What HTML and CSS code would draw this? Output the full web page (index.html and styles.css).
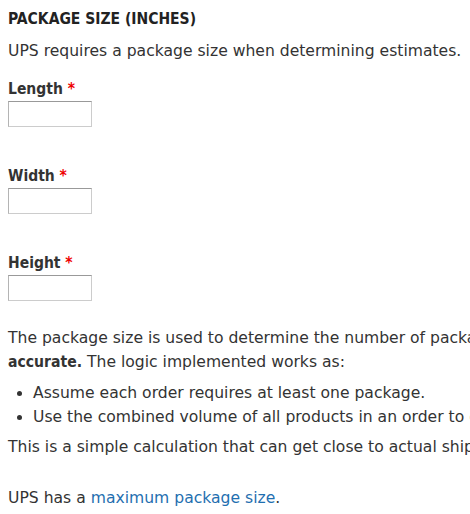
FILE: index.html
```html
<!doctype html>
<html lang="en">
<head>
    <meta charset="UTF-8">
    <title>UPS package size</title>
    <link rel="stylesheet" href="styles.css">
</head>
<body>
    <div class="page">
        <fieldset class="package">
            <h2 class="legend">Package size (inches)</h2>
            <p class="intro">UPS requires a package size when determining estimates.</p>
            <div class="form-item">
                <label for="length">Length <span class="required">*</span></label>
                <input type="text" id="length" name="length">
            </div>
            <div class="form-item">
                <label for="width">Width <span class="required">*</span></label>
                <input type="text" id="width" name="width">
            </div>
            <div class="form-item">
                <label for="height">Height <span class="required">*</span></label>
                <input type="text" id="height" name="height">
            </div>
            <div class="description">
                <p>The package size is used to determine the number of packages necessary to create a UPS shipping estimate. <b>If products do not have physical dimensions and weights associated with them, the estimates will not be<br>accurate.</b> The logic implemented works as:</p>
                <ul>
                    <li>Assume each order requires at least one package.</li>
                    <li>Use the combined volume of all products in an order to determine the number of packages.</li>
                </ul>
                <p>This is a simple calculation that can get close to actual shipping needs, but it is only an estimate.</p>
                <p class="note">UPS has a <a href="#">maximum package size</a>.</p>
            </div>
        </fieldset>
    </div>
</body>
</html>
```

FILE: styles.css
```css
html, body {
    overflow: hidden;
}
body {
    margin: 0;
    padding: 0 8px;
    font-family: 'DejaVu Sans', Verdana, sans-serif;
    font-size: 15.6px;
    line-height: 24px;
    color: #333;
    background: #fff;
}
.page {
    width: 2200px;
}
.package {
    border: 0;
    margin: 0;
    padding: 0;
}
b, .legend, .form-item label {
    font-family: 'DejaVu Sans Condensed', 'DejaVu Sans', sans-serif;
    font-weight: bold;
}
.legend {
    margin: 7px 0 0;
    font-size: 15.5px;
    line-height: 24px;
    text-transform: uppercase;
    color: #222;
}
.intro {
    margin: 8px 0 0;
}
.form-item {
    margin-top: 14px;
}
.form-item + .form-item {
    margin-top: 37px;
}
.form-item label {
    display: block;
    font-size: 15.5px;
}
.required {
    color: #e00;
}
.form-item input {
    display: block;
    width: 84px;
    height: 26px;
    box-sizing: border-box;
    border: 1px solid #ccc;
    border-top-color: #999;
    border-left-color: #b4b4b4;
    margin: 0;
    padding: 2px 4px;
    font: inherit;
}
.description {
    margin-top: 25px;
}
.description p {
    margin: 0;
}
.description ul {
    margin: 7px 0 6px;
    padding-left: 25px;
}
.description .note {
    margin-top: 27px;
}
a {
    color: #1f6fb0;
    text-decoration: none;
}
```
